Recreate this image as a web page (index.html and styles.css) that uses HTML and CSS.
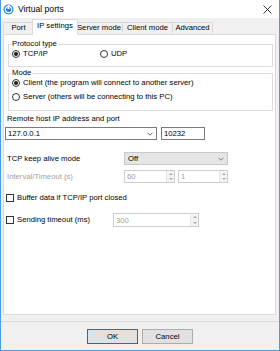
FILE: index.html
```html
<!DOCTYPE html>
<html>
<head>
<meta charset="utf-8">
<link rel="stylesheet" href="styles.css">
</head>
<body>
<div class="window">
  <div class="titlebar">
    <svg class="appicon" width="11" height="11" viewBox="0 0 11 11">
      <circle cx="5.5" cy="5.5" r="5" fill="#2a7fd4"/>
      <circle cx="5.5" cy="5.5" r="3.2" fill="none" stroke="#fff" stroke-width="1.2"/>
      <rect x="4.5" y="1" width="2" height="4" fill="#fff"/>
    </svg>
    <span class="title">Virtual ports</span>
    <svg class="close" width="9" height="9" viewBox="0 0 9 9">
      <path d="M0.5 0.5 L8.5 8.5 M8.5 0.5 L0.5 8.5" stroke="#222" stroke-width="0.9"/>
    </svg>
  </div>
  <div class="client">
    <div class="tabs">
      <div class="tab t-port">Port</div>
      <div class="tab t-ip active">IP settings</div>
      <div class="tab t-server">Server mode</div>
      <div class="tab t-client">Client mode</div>
      <div class="tab t-adv">Advanced</div>
    </div>
    <div class="panel">
      <fieldset class="group g1">
        <legend>Protocol type</legend>
        <div class="radios-inline">
          <label class="opt w-tcp"><span class="radio checked"></span>TCP/IP</label>
          <label class="opt"><span class="radio"></span>UDP</label>
        </div>
      </fieldset>
      <fieldset class="group g2">
        <legend>Mode</legend>
        <label class="opt"><span class="radio checked"></span>Client (the program will connect to another server)</label>
        <label class="opt opt-2"><span class="radio"></span>Server (others will be connecting to this PC)</label>
      </fieldset>
      <div class="label-line">Remote host IP address and port</div>
      <div class="row host-row">
        <div class="box combo host">127.0.0.1
          <svg class="chev" width="6" height="4" viewBox="0 0 6 4"><path d="M0.5 0.8 L3 3.2 L5.5 0.8" fill="none" stroke="#444" stroke-width="0.8"/></svg>
        </div>
        <div class="box port">10232</div>
      </div>
      <div class="row keep-row">
        <span class="rlabel">TCP keep alive mode</span>
        <div class="box ddl">Off
          <svg class="chev" width="6" height="4" viewBox="0 0 6 4"><path d="M0.5 0.8 L3 3.2 L5.5 0.8" fill="none" stroke="#666" stroke-width="0.8"/></svg>
        </div>
      </div>
      <div class="row int-row">
        <span class="rlabel dis">Interval/Timeout (s)</span>
        <div class="box spin s60"><span class="val">60</span><span class="arrows"><i class="up"></i><i class="dn"></i></span></div>
        <div class="box spin s1"><span class="val">1</span><span class="arrows"><i class="up"></i><i class="dn"></i></span></div>
      </div>
      <label class="opt chk-row"><span class="check"></span>Buffer data if TCP/IP port closed</label>
      <div class="row send-row">
        <label class="opt send-lbl"><span class="check"></span>Sending timeout (ms)</label>
        <div class="box spin s300"><span class="val">300</span><span class="arrows"><i class="up"></i><i class="dn"></i></span></div>
      </div>
    </div>
    <div class="sep"></div>
    <div class="buttons">
      <div class="btn default">OK</div>
      <div class="btn">Cancel</div>
    </div>
  </div>
</div>
</body>
</html>
```

FILE: styles.css
```css
* { box-sizing: border-box; }
html, body { margin: 0; padding: 0; }
body {
  width: 280px;
  height: 351px;
  font-family: "Liberation Sans", Arial, sans-serif;
  font-size: 7.7px;
  color: #000;
  background: #fff;
}
.window {
  width: 280px;
  height: 351px;
  border: 1px solid #4d9be0;
  border-top: none;
  display: flex;
  flex-direction: column;
  background: #f0f0f0;
}
.titlebar {
  height: 18px;
  background: #fff;
  display: flex;
  align-items: center;
  padding: 0 0 0 2px;
}
.appicon { margin-top: 0px; }
.title {
  font-size: 8.6px;
  margin-left: 4px;
  flex: 1;
}
.close { margin-right: 7px; }
.client {
  flex: 1;
  display: flex;
  flex-direction: column;
}
.tabs {
  display: flex;
  align-items: flex-end;
  height: 16px;
  padding-left: 2px;
  position: relative;
  z-index: 1;
}
.tab {
  height: 11px;
  border: 1px solid #d9d9d9;
  border-bottom: none;
  background: #f0f0f0;
  margin-bottom: 1px;
  text-align: center;
  line-height: 10px;
  margin-left: -1px;
  white-space: nowrap;
}
.t-port { width: 31px; margin-left: 0; }
.t-server { width: 48px; }
.t-client { width: 51px; }
.t-adv { width: 41px; }
.tab.active {
  height: 16px;
  background: #fff;
  line-height: 12px;
  width: 46px;
  margin-left: -2px;
  margin-right: -2px;
  position: relative;
  z-index: 2;
  margin-bottom: -1px;
}
.panel {
  margin: 0 3px 0 2px;
  height: 281px;
  background: #fff;
  border: 1px solid #d9d9d9;
  padding: 0 3px 0 3px;
  display: flex;
  flex-direction: column;
}
.group {
  margin: 0 0 0 1px;
  border: 1px solid #dcdcdc;
  padding: 0 4px 0 3px;
  min-width: 0;
  width: 265px;
}
.group legend {
  padding: 0 1px;
  line-height: 10px;
  margin-left: -1px;
}
.g1 { margin-top: 4px; padding-bottom: 7px; }
.g2 { margin-top: 1px; padding-bottom: 8px; }
.radios-inline { display: flex; }
.w-tcp { width: 88px; }
.opt {
  display: flex;
  align-items: center;
  height: 10px;
  line-height: 10px;
  white-space: nowrap;
}
.opt-2 { margin-top: 4px; }
.radio {
  width: 8px;
  height: 8px;
  border: 1px solid #333;
  border-radius: 50%;
  background: #fff;
  margin-right: 3px;
  flex: none;
  position: relative;
}
.radio.checked::after {
  content: "";
  position: absolute;
  left: 1px;
  top: 1px;
  width: 4px;
  height: 4px;
  border-radius: 50%;
  background: #1a1a1a;
}
.check {
  width: 8px;
  height: 8px;
  border: 1px solid #333;
  background: #fff;
  margin-right: 3px;
  flex: none;
}
.label-line {
  margin-top: 3px;
  line-height: 10px;
  height: 10px;
}
.row {
  display: flex;
  align-items: center;
}
.box {
  height: 13px;
  border: 1px solid #7a7a7a;
  background: #fff;
  line-height: 11px;
  padding-left: 2px;
  position: relative;
  display: flex;
  align-items: center;
}
.chev { position: absolute; right: 3px; top: 4px; }
.host-row { margin-top: 3px; margin-left: -2px; }
.host { width: 152px; }
.port { width: 44px; margin-left: 4px; }
.keep-row { margin-top: 12px; }
.rlabel { width: 117px; flex: none; }
.dis { color: #a0a0a0; }
.ddl {
  width: 104px;
  background: #e5e5e5;
  border-color: #c8c8c8;
  padding-left: 3px;
}
.int-row { margin-top: 5px; }
.spin {
  border-color: #cccccc;
  color: #a0a0a0;
  justify-content: space-between;
  padding-right: 0;
}
.s60 { width: 51px; }
.s1 { width: 50px; margin-left: 3px; }
.arrows {
  width: 8px;
  height: 11px;
  display: flex;
  flex-direction: column;
  justify-content: space-around;
  align-items: center;
  background: #f4f4f4;
  border-left: 1px solid #e6e6e6;
}
.arrows i {
  display: block;
  width: 0;
  height: 0;
  border-left: 2px solid transparent;
  border-right: 2px solid transparent;
}
.arrows .up { border-bottom: 2px solid #a8a8a8; }
.arrows .dn { border-top: 2px solid #a8a8a8; }
.chk-row { margin-top: 10px; margin-left: -1px; }
.send-row { margin-top: 10px; }
.send-lbl { width: 107px; margin-left: -1px; }
.s300 { width: 86px; height: 14px; }
.sep {
  height: 1px;
  background: #dadada;
  margin: 6px 0 0 0;
}
.buttons {
  display: flex;
  justify-content: center;
  gap: 4px;
  margin-top: 7px;
}
.btn {
  width: 51px;
  height: 15px;
  border: 1px solid #adadad;
  background: #e1e1e1;
  text-align: center;
  line-height: 13px;
}
.btn.default { border-color: #0078d7; }
```
